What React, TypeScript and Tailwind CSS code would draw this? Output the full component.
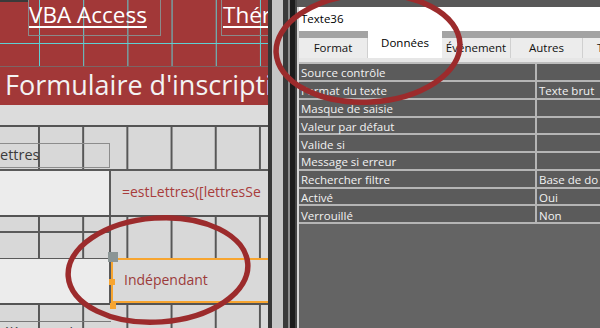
import React from "react";

const rows: [string, string][] = [
  ["Source contrôle", ""],
  ["Format du texte", "Texte brut"],
  ["Masque de saisie", ""],
  ["Valeur par défaut", ""],
  ["Valide si", ""],
  ["Message si erreur", ""],
  ["Rechercher filtre", "Base de do"],
  ["Activé", "Oui"],
  ["Verrouillé", "Non"],
];

function LeftPanel() {
  return (
    <div className="w-[268px] h-full shrink-0 flex flex-col overflow-hidden">
      {/* En-tête de formulaire */}
      <div className="h-[67px] shrink-0 flex flex-col bg-[#a23838] bg-[linear-gradient(to_right,#5fd0d3_1px,transparent_1px)] bg-[length:44.2px_100%] bg-[position:39px_0] border-b border-[#7c6565]">
        <div className="h-[44px] shrink-0 flex items-start border-b border-[#5fd0d3]">
          <div className="w-[28px] h-[2px] bg-[#3a3a3a] shrink-0" />
          <div className="w-[133px] h-[36px] shrink-0 border border-t-0 border-[#8a8a8a] pt-[4px] leading-[22px] text-[22.5px] text-white whitespace-nowrap">
            <span className="underline decoration-2 underline-offset-[3px]">VBA Access</span>
          </div>
          <div className="w-[60px] shrink-0" />
          <div className="flex-1 h-[36px] border border-t-0 border-r-0 border-[#8a8a8a] pl-[1px] pt-[4px] leading-[22px] text-[22.5px] text-white whitespace-nowrap overflow-hidden">
            <span className="underline decoration-2 underline-offset-[3px]">Thér</span>
          </div>
        </div>
        <div className="flex-1" />
      </div>
      <div className="h-[38px] shrink-0 bg-[#a23838] pl-[5px] text-[27px] leading-[36px] text-[#f3f3f3] whitespace-nowrap overflow-hidden">
        Formulaire d'inscripti
      </div>
      {/* Barre de section */}
      <div className="h-[22px] shrink-0 bg-[#dcdcdc] border-b-2 border-[#545454]" />
      {/* Détail */}
      <div className="flex-1 flex flex-col bg-[#d8d8d8] bg-[linear-gradient(to_right,#575757_2px,transparent_2px)] bg-[length:44.2px_100%] bg-[position:38px_0]">
        <div className="h-[16px] shrink-0" />
        <div className="h-[25px] shrink-0 flex">
          <div className="w-[110px] border border-l-0 border-[#8c8c8c] flex items-center text-[14.5px] text-[#3c3c3c] leading-none whitespace-nowrap">
            ettres
          </div>
        </div>
        <div className="h-[1px] shrink-0" />
        <div className="h-[48px] shrink-0 flex border-b-2 border-[#545454]">
          <div className="w-[111px] shrink-0 bg-[#ececec] border-t-2 border-r-2 border-[#5a5a5a]" />
          <div className="flex-1 bg-[#d9d9d9] border-t-2 border-[#5a5a5a] pl-[11px] pb-[4px] flex items-center text-[14px] text-[#a83c3c] whitespace-nowrap overflow-hidden">
            =estLettres([lettresSe
          </div>
        </div>
        <div className="h-[41px] shrink-0 flex">
          <div className="w-[111px] shrink-0 border-r-2 border-[#5a5a5a]">
            <div className="h-[16px] border-b-2 border-[#5a5a5a]" />
          </div>
        </div>
        <div className="h-[45px] shrink-0 flex">
          <div className="w-[111px] shrink-0 bg-[#ececec] border-t border-r-2 border-[#5a5a5a]" />
          <div className="relative flex-1 bg-[#d9d9d9] border-2 border-r-0 border-[#f7a530] pl-[11px] pb-[2px] flex items-center text-[14px] text-[#9c3b3b] whitespace-nowrap">
            Indépendant
            <div className="absolute left-[-5px] top-[-8px] w-[10px] h-[10px] bg-[#8b9595]" />
            <div className="absolute left-[-4px] top-[19px] w-[6px] h-[6px] bg-[#f7a530]" />
            <div className="absolute left-[-3px] top-[43px] w-[6px] h-[6px] bg-[#f7a530]" />
          </div>
        </div>
        <div className="h-[2px] shrink-0 bg-[#545454]" />
        <div className="h-[17px] shrink-0 flex">
          <div className="w-[111px] border-b border-[#7a7a7a]" />
        </div>
        <div className="flex text-[14px] leading-[14px] text-[#3c3c3c] whitespace-nowrap pt-[4px]">
          <span className="w-[52px] pl-[2px]">élève</span>
          <span>Fiche</span>
        </div>
      </div>
    </div>
  );
}

function Separator() {
  return (
    <div className="h-full shrink-0 flex">
      <div className="w-[4px] bg-[#363636]" />
      <div className="w-[11px] bg-[#c6c6c6]" />
      <div className="w-[5px] bg-[#3a3a3a]" />
      <div className="w-[2px] bg-[#8a8a8a]" />
      <div className="w-[5px] bg-[#1c1c1c]" />
      <div className="w-[2px] bg-[#444444]" />
    </div>
  );
}

function Tab({ label, active, w }: { label: string; active?: boolean; w: string }) {
  return active ? (
    <div className={`${w} h-[27px] shrink-0 bg-white flex items-center justify-center pb-[4px] text-[11.5px] text-black`}>
      {label}
    </div>
  ) : (
    <div className={`${w} h-[20px] shrink-0 bg-[#ececec] border-r border-[#d0d0d0] flex items-center justify-center text-[11.5px] text-[#111]`}>
      {label}
    </div>
  );
}

function RightPanel() {
  return (
    <div className="flex-1 h-full flex flex-col bg-[#646464] overflow-hidden">
      <div className="h-[7px] shrink-0 bg-[#585858]" />
      <div className="flex-1 flex flex-col border-l-2 border-[#d6d6d6]">
        <div className="h-[24px] shrink-0 bg-white pl-[2px] flex items-center text-[11.5px] text-black">
          Texte36
        </div>
        <div className="h-[27px] shrink-0 bg-[#a3a3a3] flex items-end whitespace-nowrap overflow-hidden">
          <Tab label="Format" w="w-[69px]" />
          <Tab label="Données" active w="w-[74px]" />
          <Tab label="Événement" w="w-[69px]" />
          <Tab label="Autres" w="w-[72px]" />
          <div className="w-[19px] h-[20px] shrink-0 bg-[#ececec] pl-[14px] flex items-center text-[11.5px] text-[#111] overflow-hidden">
            T
          </div>
        </div>
        <div className="h-[4px] shrink-0 bg-[#e6e6e6]" />
        <div className="flex flex-col border-t-2 border-[#bdbdbd]">
          {rows.map(([k, v], i) => (
            <div
              key={k}
              className={`${i === 0 ? "h-[18px]" : "h-[17.75px]"} flex border-b-2 border-[#b5b5b5] bg-[#5b5b5b] text-[11.5px] text-[#f2f2f2] whitespace-nowrap`}
            >
              <div className="w-[238px] shrink-0 pl-[2px] pt-[2px] flex items-center border-r-2 border-[#b5b5b5]">{k}</div>
              <div className="flex-1 pl-[2px] pt-[2px] flex items-center overflow-hidden">{v}</div>
            </div>
          ))}
        </div>
        <div className="flex-1" />
      </div>
    </div>
  );
}

export default function App() {
  return (
    <div className="relative w-[600px] h-[328px] overflow-hidden flex bg-[#646464] font-['Open_Sans',sans-serif]">
      <LeftPanel />
      <Separator />
      <RightPanel />
      <svg className="absolute inset-0 pointer-events-none" width="600" height="328" viewBox="0 0 600 328">
        <ellipse cx="368" cy="48" rx="92" ry="54" transform="rotate(-3 368 48)" fill="none" stroke="#9c2b2c" strokeWidth="5.5" />
        <ellipse cx="158" cy="270" rx="90" ry="52" transform="rotate(-4 158 270)" fill="none" stroke="#9c2b2c" strokeWidth="5.5" />
      </svg>
    </div>
  );
}
